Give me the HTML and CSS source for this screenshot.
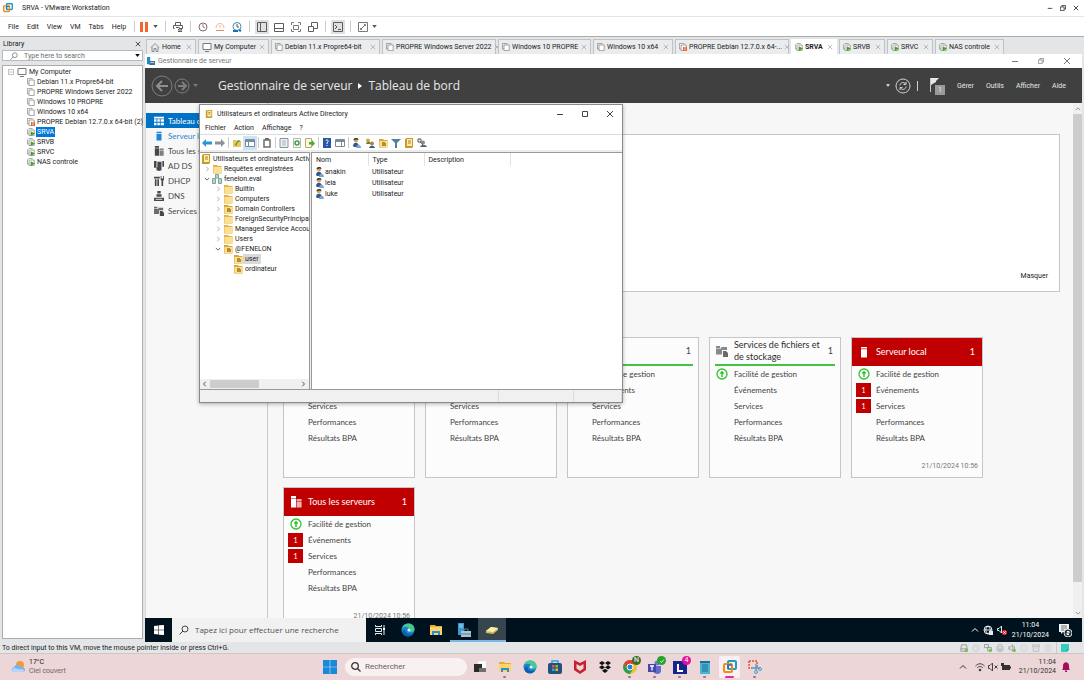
FILE: index.html
```html
<!DOCTYPE html>
<html lang="fr">
<head>
    <meta charset="UTF-8">
    <meta name="viewport" content="width=device-width, initial-scale=1.0">
    <title>SRVA - VMware Workstation</title>
    <link rel="stylesheet" href="styles.css">
</head>
<body>
    <svg class="d-none" aria-hidden="true">
        <symbol id="i-vm" viewBox="0 0 10 10">
            <path d="M2.5 7.5h-2v-7h6v1" fill="none" stroke="#8a8d90"/>
            <path d="M2.5 2.5h6.500v7h-6.500z" fill="#fff" stroke="#8a8d90"/>
        </symbol>
        <symbol id="i-vm-run" viewBox="0 0 10 10">
            <path d="M2.500 7.500h-2v-5l2-2h4v1M2.500 9.500v-6l1-1h5.500v7z" fill="#fff" stroke="#8a8d90"/>
            <path d="M4.500 4l5.500 3-5.500 3z" fill="#3fa21c"/>
        </symbol>
        <symbol id="i-vm-pause" viewBox="0 0 10 10">
            <path d="M2.500 7.500h-2v-7h6v1M2.500 9.500v-7h6.500v7z" fill="#fff" stroke="#8a8d90"/>
            <path d="M5 5h2v5h-2zM8 5h2v5h-2z" fill="#f0622d"/>
        </symbol>
        <symbol id="i-pc" viewBox="0 0 10 10">
            <path d="M1 1.500h8v6h-8zM3 9.500h4" fill="#fff" stroke="#77797c"/>
        </symbol>
        <symbol id="i-home" viewBox="0 0 10 10">
            <path d="M1 5.500l4-4 4 4M2 5v4.500h2v-3h2v3h2v-4.500" fill="none" stroke="#8a8d90"/>
        </symbol>
        <symbol id="i-search" viewBox="0 0 10 10">
            <circle cx="6" cy="4" r="3" fill="none" stroke="currentColor"/>
            <path d="M4 6l-3.500 3.500" stroke="currentColor"/>
        </symbol>
        <symbol id="i-caret" viewBox="0 0 6 4"><path d="M0 0h6l-3 4z" fill="currentColor"/></symbol>
        <symbol id="i-min" viewBox="0 0 8 8"><path d="M1 4.500h6" stroke="currentColor"/></symbol>
        <symbol id="i-max" viewBox="0 0 8 8"><path d="M1.500 1.500h5v5h-5z" fill="none" stroke="currentColor"/></symbol>
        <symbol id="i-restore" viewBox="0 0 8 8"><path d="M.5 2.500h5v5h-5zM2.500 2v-1.500h5v5h-1.500" fill="none" stroke="currentColor"/></symbol>
        <symbol id="i-close" viewBox="0 0 8 8"><path d="M1 1l6 6M7 1l-6 6" stroke="currentColor"/></symbol>
        <symbol id="i-right" viewBox="0 0 8 8"><path d="M3 1l3 3-3 3" fill="none" stroke="currentColor"/></symbol>
        <symbol id="i-down" viewBox="0 0 8 8"><path d="M1 2.500l3 3 3-3" fill="none" stroke="currentColor"/></symbol>
        <symbol id="i-up" viewBox="0 0 8 8"><path d="M1 5.500l3-3 3 3" fill="none" stroke="currentColor"/></symbol>
        <symbol id="i-left" viewBox="0 0 8 8"><path d="M5 1l-3 3 3 3" fill="none" stroke="currentColor"/></symbol>
        <symbol id="i-vmware" viewBox="0 0 14 14">
            <rect x="5" y="1" width="8" height="8" rx="1" fill="none" stroke="#1c9bc9" stroke-width="2"/>
            <rect x="1" y="4" width="8" height="8" rx="1" fill="none" stroke="#f08c1e" stroke-width="2"/>
            <path d="M5 9V5h4" fill="none" stroke="#1b75ac" stroke-width="1.500"/>
        </symbol>
        <symbol id="i-folder" viewBox="0 0 10 10">
            <path d="M1 1h4l1 1h3.500v7.500h-8.500z" fill="#e3b34c"/>
            <path d="M1.500 3h8v6h-8z" fill="#fbe094"/>
        </symbol>
        <symbol id="i-ou" viewBox="0 0 10 10">
            <path d="M1 1h4l1 1h3.500v7.500h-8.500z" fill="#d9a63a"/>
            <path d="M1.500 3h8v6h-8z" fill="#fbe094"/>
            <path d="M4 4h3v1h1v3h-4z" fill="#b98d2e"/>
        </symbol>
        <symbol id="i-book" viewBox="0 0 10 10">
            <path d="M1 1l2-1h6v9l-1 1h-7z" fill="#c79a28"/>
            <path d="M3 1h5v7h-5z" fill="#ffeeb0"/>
            <path d="M4 3h3M4 5h3" stroke="#a78228"/>
        </symbol>
        <symbol id="i-domain" viewBox="0 0 10 10">
            <path d="M3.500 .5h3v3.500h-3zM.5 4.500h3v5h-3zM6.500 4.500h3v5h-3z" fill="#b5d6c8" stroke="#7fa69a"/>
        </symbol>
        <symbol id="i-user" viewBox="0 0 8 10">
            <circle cx="3" cy="2.500" r="2" fill="#d0a268"/>
            <path d="M.5 2.500c0-3.500 5-3.500 5-.5l-2-.5z" fill="#4c3a22"/>
            <path d="M0 8c0-4.500 5.500-4.500 6 0l-1 1h-4z" fill="#31598c"/>
            <path d="M3 10c0-4.500 5-4.500 5 0z" fill="#7ba5d3"/>
        </symbol>
        <symbol id="i-manage" viewBox="0 0 12 12">
            <circle cx="6" cy="6" r="5" fill="#fff" stroke="#2fc42f" stroke-width="1.300"/>
            <path d="M6 9v-5M4.300 5.500l1.700-1.700 1.700 1.700" fill="none" stroke="#2fc42f" stroke-width="1.500"/>
        </symbol>
        <symbol id="i-server" viewBox="0 0 12 12"><path d="M3 1h6v1.500h-6zM3 3.200h6v8.300h-6z" fill="currentColor"/></symbol>
        <symbol id="i-servers" viewBox="0 0 12 12">
            <path d="M1 0h5v2h-5zM1 2.600h5v9h-5z" fill="currentColor"/>
            <path d="M6.600 3h5v2h-5zM6.600 5.600h5v6h-5z" fill="currentColor" opacity="0.700"/>
        </symbol>
        <symbol id="i-files" viewBox="0 0 12 12">
            <path d="M0 1h4v2h-4zM0 3.500h6v6h-6zM5 2h6v3h-5z" fill="currentColor" opacity="0.800"/>
            <path d="M7 6h3l2 2v4h-5z" fill="currentColor"/>
        </symbol>
        <symbol id="i-edge" viewBox="0 0 14 14">
            <circle cx="7" cy="7" r="6.500" fill="#1687cf"/>
            <path d="M1 5c2-6 12-6 12.500 1 0 3-4 4-5.500 2 2-3-3-6-7-3z" fill="#48c991"/>
            <path d="M4.500 6c-1 4 3 6 7.500 4.500-3 5-11 3-10.500-2.500z" fill="#0d5eae"/>
            <circle cx="8" cy="7" r="1.500" fill="#e9f3f6"/>
        </symbol>
        <symbol id="i-explorer" viewBox="0 0 14 14">
            <path d="M1 2h5l1 1h6v9h-12z" fill="#e9ab28"/>
            <path d="M1 4h12v8h-12z" fill="#fbd667"/>
            <path d="M3 8h8v4h-2v-2h-4v2h-2z" fill="#2e8bd5"/>
        </symbol>
    </svg>

    <div class="desktop">
        <header class="host-title">
            <svg class="icon-10"><use href="#i-vmware"/></svg>
            <h1 class="host-title-text">SRVA - VMware Workstation</h1>
            <div class="window-buttons host-buttons">
                <button type="button" aria-label="Minimize"><svg class="icon-6"><use href="#i-min"/></svg></button>
                <button type="button" aria-label="Restore"><svg class="icon-6"><use href="#i-restore"/></svg></button>
                <button type="button" aria-label="Close"><svg class="icon-6"><use href="#i-close"/></svg></button>
            </div>
        </header>

        <nav class="host-menu">
            <button type="button" class="menu-item">File</button>
            <button type="button" class="menu-item">Edit</button>
            <button type="button" class="menu-item">View</button>
            <button type="button" class="menu-item">VM</button>
            <button type="button" class="menu-item">Tabs</button>
            <button type="button" class="menu-item">Help</button>
            <span class="separator"></span>
            <button type="button" class="tool tool-pause" aria-label="Suspend">
                <svg class="icon-10" viewBox="0 0 10 10"><path d="M1 0h3v10h-3zM6 0h3v10h-3z" fill="#f2662b"/></svg>
            </button>
            <button type="button" class="tool-caret" aria-label="Power options"><svg class="caret"><use href="#i-caret"/></svg></button>
            <span class="separator"></span>
            <button type="button" class="tool" aria-label="Send Ctrl+Alt+Del">
                <svg class="icon-10" viewBox="0 0 10 10"><path d="M2.500 3v-2.500h5v2.500M1.500 6.500h-1v-3h9v3h-2M3 5.500h3.500M7 6l-2 2h4zM5 9.500h4" fill="none" stroke="#5b5e61"/></svg>
            </button>
            <span class="separator"></span>
            <button type="button" class="tool" aria-label="Take snapshot">
                <svg class="icon-10" viewBox="0 0 10 10"><circle cx="5" cy="5" r="4" fill="none" stroke="#6f7376"/><path d="M5 2v3l2 1" fill="none" stroke="#e06037"/></svg>
            </button>
            <button type="button" class="tool" aria-label="Revert snapshot">
                <svg class="icon-10" viewBox="0 0 10 10"><path d="M1 6c0-6 8-6 8 0M5 3v3" fill="none" stroke="#e9b9a4"/><path d="M1 8.500h8" stroke="#f08a60"/></svg>
            </button>
            <button type="button" class="tool" aria-label="Manage snapshots">
                <svg class="icon-10" viewBox="0 0 10 10"><circle cx="5" cy="4.500" r="4" fill="none" stroke="#3989bd"/><path d="M5 2v3h2" fill="none" stroke="#555"/><path d="M1 9h5M7 8l2 1" stroke="#1672ad" stroke-width="2"/></svg>
            </button>
            <span class="separator"></span>
            <button type="button" class="tool tool-on" aria-label="Library">
                <svg class="icon-10" viewBox="0 0 10 10"><path d="M.5 .5h9v9h-9zM3.500 .5v9" fill="none" stroke="#5b5e61"/></svg>
            </button>
            <button type="button" class="tool" aria-label="Thumbnail bar">
                <svg class="icon-10" viewBox="0 0 10 10"><path d="M.5 1.500h9v8h-9zM.5 6.500h9" fill="none" stroke="#5b5e61"/></svg>
            </button>
            <button type="button" class="tool" aria-label="Full screen">
                <svg class="icon-10" viewBox="0 0 10 10"><path d="M.5 3v-2.500h2.500M7 .5h2.500v2.500M9.500 7v2.500h-2.500M3 9.500h-2.500v-2.500M2.500 3.500h5v4h-5z" fill="none" stroke="#77797c"/></svg>
            </button>
            <button type="button" class="tool" aria-label="Unity">
                <svg class="icon-10" viewBox="0 0 10 10"><path d="M.5 4.500h5v5h-5zM3.500 4v-3.500h6v6h-3.500" fill="none" stroke="#5b5e61"/></svg>
            </button>
            <span class="separator"></span>
            <button type="button" class="tool tool-on" aria-label="Console">
                <svg class="icon-10" viewBox="0 0 10 10"><path d="M.5 .5h9v9h-9zM2 3l2 2-2 2M5 7.500h3" fill="none" stroke="#5b5e61"/></svg>
            </button>
            <span class="separator"></span>
            <button type="button" class="tool" aria-label="Stretch">
                <svg class="icon-10" viewBox="0 0 10 10"><path d="M.5 .5h9v9h-9zM6 2.500h1.500v1.500M2.500 6v1.500h1.500M7 3l-4 4" fill="none" stroke="#77797c"/></svg>
            </button>
            <button type="button" class="tool-caret" aria-label="Stretch options"><svg class="caret"><use href="#i-caret"/></svg></button>
        </nav>

        <div class="workspace">
            <aside class="library">
                <div class="library-head">
                    <h2>Library</h2>
                    <button type="button" aria-label="Close library"><svg class="icon-6"><use href="#i-close"/></svg></button>
                </div>
                <div class="library-search">
                    <svg class="icon-8"><use href="#i-search"/></svg>
                    <input type="text" placeholder="Type here to search" aria-label="Search library">
                    <button type="button" aria-label="Search options"><svg class="caret"><use href="#i-caret"/></svg></button>
                </div>
                <ul class="library-tree">
                    <li class="library-root">
                        <svg class="icon-6" viewBox="0 0 8 8"><path d="M.5 .5h7v7h-7zM2 4h4" fill="none" stroke="#a0a3a6"/></svg>
                        <button type="button"><svg class="icon-10"><use href="#i-pc"/></svg><span>My Computer</span></button>
                    </li>
                    <li><button type="button"><svg class="icon-8"><use href="#i-vm"/></svg><span>Debian 11.x Propre64-bit</span></button></li>
                    <li><button type="button"><svg class="icon-8"><use href="#i-vm"/></svg><span>PROPRE Windows Server 2022</span></button></li>
                    <li><button type="button"><svg class="icon-8"><use href="#i-vm"/></svg><span>Windows 10 PROPRE</span></button></li>
                    <li><button type="button"><svg class="icon-8"><use href="#i-vm"/></svg><span>Windows 10 x64</span></button></li>
                    <li><button type="button"><svg class="icon-8"><use href="#i-vm-pause"/></svg><span>PROPRE Debian 12.7.0.x 64-bit (2)</span></button></li>
                    <li><button type="button" class="selected"><svg class="icon-8"><use href="#i-vm-run"/></svg><span>SRVA</span></button></li>
                    <li><button type="button"><svg class="icon-8"><use href="#i-vm-run"/></svg><span>SRVB</span></button></li>
                    <li><button type="button"><svg class="icon-8"><use href="#i-vm-run"/></svg><span>SRVC</span></button></li>
                    <li><button type="button"><svg class="icon-8"><use href="#i-vm-run"/></svg><span>NAS controle</span></button></li>
                </ul>
            </aside>

            <section class="console">
                <nav class="tabs">
                    <button type="button" class="tab tab-home"><svg class="icon-10"><use href="#i-home"/></svg><span>Home</span><svg class="icon-6 tab-x"><use href="#i-close"/></svg></button>
                    <button type="button" class="tab tab-computer"><svg class="icon-10"><use href="#i-pc"/></svg><span>My Computer</span><svg class="icon-6 tab-x"><use href="#i-close"/></svg></button>
                    <button type="button" class="tab tab-debian"><svg class="icon-8"><use href="#i-vm"/></svg><span>Debian 11.x Propre64-bit</span><svg class="icon-6 tab-x"><use href="#i-close"/></svg></button>
                    <button type="button" class="tab tab-long"><svg class="icon-8"><use href="#i-vm"/></svg><span>PROPRE Windows Server 2022</span><svg class="icon-6 tab-x"><use href="#i-close"/></svg></button>
                    <button type="button" class="tab tab-win"><svg class="icon-8"><use href="#i-vm"/></svg><span>Windows 10 PROPRE</span><svg class="icon-6 tab-x"><use href="#i-close"/></svg></button>
                    <button type="button" class="tab tab-x64"><svg class="icon-8"><use href="#i-vm"/></svg><span>Windows 10 x64</span><svg class="icon-6 tab-x"><use href="#i-close"/></svg></button>
                    <button type="button" class="tab tab-long"><svg class="icon-8"><use href="#i-vm-pause"/></svg><span>PROPRE Debian 12.7.0.x 64-...</span><svg class="icon-6 tab-x"><use href="#i-close"/></svg></button>
                    <button type="button" class="tab tab-srv tab-active"><svg class="icon-8"><use href="#i-vm-run"/></svg><span>SRVA</span><svg class="icon-6 tab-x"><use href="#i-close"/></svg></button>
                    <button type="button" class="tab tab-srv"><svg class="icon-8"><use href="#i-vm-run"/></svg><span>SRVB</span><svg class="icon-6 tab-x"><use href="#i-close"/></svg></button>
                    <button type="button" class="tab tab-srv"><svg class="icon-8"><use href="#i-vm-run"/></svg><span>SRVC</span><svg class="icon-6 tab-x"><use href="#i-close"/></svg></button>
                    <button type="button" class="tab tab-nas"><svg class="icon-8"><use href="#i-vm-run"/></svg><span>NAS controle</span><svg class="icon-6 tab-x"><use href="#i-close"/></svg></button>
                </nav>

                <div class="guest">
                    <div class="manager-title">
                        <svg class="icon-8" viewBox="0 0 10 10"><path d="M0 0h4v9h-4z" fill="#1f8ad0"/><path d="M3 5h7v5h-7z" fill="#3c6f96"/><path d="M4 7h5" stroke="#dbe9f3"/></svg>
                        <h2>Gestionnaire de serveur</h2>
                        <div class="window-buttons manager-buttons">
                            <button type="button" aria-label="Réduire"><svg class="icon-8"><use href="#i-min"/></svg></button>
                            <button type="button" aria-label="Restaurer"><svg class="icon-6"><use href="#i-restore"/></svg></button>
                            <button type="button" aria-label="Fermer"><svg class="icon-8"><use href="#i-close"/></svg></button>
                        </div>
                    </div>

                    <div class="manager-bar">
                        <button type="button" aria-label="Précédent">
                            <svg class="icon-22" viewBox="0 0 22 22"><circle cx="11" cy="11" r="10" fill="none" stroke="#7e7e7e"/><path d="M17 11h-11M11 6l-5 5 5 5" fill="none" stroke="#8f8f8f" stroke-width="2"/></svg>
                        </button>
                        <button type="button" aria-label="Suivant">
                            <svg class="icon-16" viewBox="0 0 16 16"><circle cx="8" cy="8" r="7" fill="none" stroke="#7e7e7e"/><path d="M4 8h8M8 4l4 4-4 4" fill="none" stroke="#7e7e7e" stroke-width="2"/></svg>
                        </button>
                        <button type="button" class="bar-history" aria-label="Historique"><svg class="caret"><use href="#i-caret"/></svg></button>
                        <p class="bar-path"><span>Gestionnaire de serveur</span><svg class="path-arrow" viewBox="0 0 4 6"><path d="M0 0l4 3-4 3z" fill="#fff"/></svg><span>Tableau de bord</span></p>
                        <div class="bar-tools">
                            <button type="button" aria-label="Options"><svg class="bar-caret"><use href="#i-caret"/></svg></button>
                            <button type="button" aria-label="Actualiser">
                                <svg class="icon-16" viewBox="0 0 16 16"><circle cx="8" cy="8" r="7" fill="none" stroke="#d0d0d0"/><path d="M5 7.500c0-3 4-4 5.500-1.500M11 4v2.500h-2.500M11 8.500c0 3-4 4-5.500 1.500M5 12v-2.500h2.500" fill="none" stroke="#d0d0d0"/></svg>
                            </button>
                            <span class="bar-rule"></span>
                            <button type="button" class="flag" aria-label="Notifications">
                                <svg viewBox="0 0 10 16"><path d="M1 0h1v14h-1z" fill="#c8c8c8"/><path d="M2 0h8l-3 3v1l-5 3z" fill="#e6e6e6"/></svg>
                                <span class="flag-count">1</span>
                            </button>
                            <button type="button" class="bar-menu">Gérer</button>
                            <button type="button" class="bar-menu">Outils</button>
                            <button type="button" class="bar-menu">Afficher</button>
                            <button type="button" class="bar-menu">Aide</button>
                        </div>
                    </div>

                    <div class="manager-body">
                        <nav class="roles">
                            <a href="#" class="role role-active"><svg class="icon-10" viewBox="0 0 12 12"><path d="M0 1h12v2h-12zM0 4h3v3h-3zM4 4h3v3h-3zM8 4h4v3h-4zM0 8h3v3h-3zM4 8h3v3h-3zM8 8h4v3h-4z" fill="#fff"/></svg>Tableau de bord</a>
                            <a href="#" class="role role-local"><svg class="icon-10"><use href="#i-server"/></svg>Serveur local</a>
                            <a href="#" class="role"><svg class="icon-10"><use href="#i-servers"/></svg>Tous les serveurs</a>
                            <a href="#" class="role"><svg class="icon-10" viewBox="0 0 12 12"><path d="M0 0h3v8h-3zM4 1h5v7h-5zM10 0h2v7h-2zM3 8l3-2 3 2v3l-3 1-3-1z" fill="currentColor"/></svg>AD DS</a>
                            <a href="#" class="role"><svg class="icon-10" viewBox="0 0 12 12"><path d="M0 1h7v2h-7zM1 4h2v8h-2zM4 4h2v8h-2zM8 0h1v3h2v-3h1v5h-1v7h-2v-7h-1z" fill="currentColor"/></svg>DHCP</a>
                            <a href="#" class="role"><svg class="icon-10" viewBox="0 0 12 12"><path d="M4 0h4v3h-4zM3 4h6v3h-6zM0 8h12v4h-12z" fill="currentColor"/><path d="M2 10h8" stroke="#f7f7f7"/></svg>DNS</a>
                            <a href="#" class="role"><svg class="icon-10"><use href="#i-files"/></svg>Services de fichiers et de stockage</a>
                        </nav>

                        <main class="dashboard">
                            <section class="welcome"><a href="#">Masquer</a></section>
                            <div class="tiles">
                                <article class="tile">
                                    <div class="tile-head"><svg class="icon-12"><use href="#i-servers"/></svg><h3>AD DS</h3><span>1</span></div>
                                    <ul class="tile-rows">
                                        <li><svg class="icon-12"><use href="#i-manage"/></svg><a href="#">Facilité de gestion</a></li>
                                        <li><a href="#">Événements</a></li>
                                        <li><a href="#">Services</a></li>
                                        <li><a href="#">Performances</a></li>
                                        <li><a href="#">Résultats BPA</a></li>
                                    </ul>
                                </article>
                                <article class="tile">
                                    <div class="tile-head"><svg class="icon-12"><use href="#i-servers"/></svg><h3>DHCP</h3><span>1</span></div>
                                    <ul class="tile-rows">
                                        <li><svg class="icon-12"><use href="#i-manage"/></svg><a href="#">Facilité de gestion</a></li>
                                        <li><a href="#">Événements</a></li>
                                        <li><a href="#">Services</a></li>
                                        <li><a href="#">Performances</a></li>
                                        <li><a href="#">Résultats BPA</a></li>
                                    </ul>
                                </article>
                                <article class="tile">
                                    <div class="tile-head"><svg class="icon-12"><use href="#i-servers"/></svg><h3>DNS</h3><span>1</span></div>
                                    <ul class="tile-rows">
                                        <li><svg class="icon-12"><use href="#i-manage"/></svg><a href="#">Facilité de gestion</a></li>
                                        <li><a href="#">Événements</a></li>
                                        <li><a href="#">Services</a></li>
                                        <li><a href="#">Performances</a></li>
                                        <li><a href="#">Résultats BPA</a></li>
                                    </ul>
                                </article>
                                <article class="tile">
                                    <div class="tile-head"><svg class="icon-12"><use href="#i-files"/></svg><h3>Services de fichiers et de stockage</h3><span>1</span></div>
                                    <ul class="tile-rows">
                                        <li><svg class="icon-12"><use href="#i-manage"/></svg><a href="#">Facilité de gestion</a></li>
                                        <li><a href="#">Événements</a></li>
                                        <li><a href="#">Services</a></li>
                                        <li><a href="#">Performances</a></li>
                                        <li><a href="#">Résultats BPA</a></li>
                                    </ul>
                                </article>
                                <article class="tile tile-alert">
                                    <div class="tile-head"><svg class="icon-12"><use href="#i-server"/></svg><h3>Serveur local</h3><span>1</span></div>
                                    <ul class="tile-rows">
                                        <li><svg class="icon-12"><use href="#i-manage"/></svg><a href="#">Facilité de gestion</a></li>
                                        <li><span class="alert-count">1</span><a href="#">Événements</a></li>
                                        <li><span class="alert-count">1</span><a href="#">Services</a></li>
                                        <li><a href="#">Performances</a></li>
                                        <li><a href="#">Résultats BPA</a></li>
                                    </ul>
                                    <p class="tile-date">21/10/2024 10:56</p>
                                </article>
                                <article class="tile tile-alert">
                                    <div class="tile-head"><svg class="icon-12"><use href="#i-servers"/></svg><h3>Tous les serveurs</h3><span>1</span></div>
                                    <ul class="tile-rows">
                                        <li><svg class="icon-12"><use href="#i-manage"/></svg><a href="#">Facilité de gestion</a></li>
                                        <li><span class="alert-count">1</span><a href="#">Événements</a></li>
                                        <li><span class="alert-count">1</span><a href="#">Services</a></li>
                                        <li><a href="#">Performances</a></li>
                                        <li><a href="#">Résultats BPA</a></li>
                                    </ul>
                                    <p class="tile-date">21/10/2024 10:56</p>
                                </article>
                            </div>
                        </main>

                        <div class="scroll-v">
                            <svg class="icon-6"><use href="#i-up"/></svg>
                            <span class="scroll-v-thumb"></span>
                            <svg class="icon-6"><use href="#i-down"/></svg>
                        </div>
                    </div>

                    <!-- Active Directory -->
                    <section class="ad-window">
                        <div class="ad-title">
                            <svg class="icon-8"><use href="#i-book"/></svg>
                            <h2>Utilisateurs et ordinateurs Active Directory</h2>
                            <div class="window-buttons ad-buttons">
                                <button type="button" aria-label="Réduire"><svg class="icon-8"><use href="#i-min"/></svg></button>
                                <button type="button" aria-label="Agrandir"><svg class="icon-8"><use href="#i-max"/></svg></button>
                                <button type="button" aria-label="Fermer"><svg class="icon-8"><use href="#i-close"/></svg></button>
                            </div>
                        </div>
                        <div class="ad-menu">
                            <button type="button">Fichier</button>
                            <button type="button">Action</button>
                            <button type="button">Affichage</button>
                            <button type="button">?</button>
                        </div>
                        <div class="ad-toolbar">
                            <button type="button" aria-label="Précédent"><svg class="icon-10" viewBox="0 0 10 10"><path d="M0 5l4-4v2.500h6v3h-6v2.500z" fill="#2b93d6"/></svg></button>
                            <button type="button" aria-label="Suivant"><svg class="icon-10" viewBox="0 0 10 10"><path d="M10 5l-4-4v2.500h-6v3h6v2.500z" fill="#8b9196"/></svg></button>
                            <span class="separator"></span>
                            <button type="button" aria-label="Dossier parent"><svg class="icon-10" viewBox="0 0 10 10"><path d="M1 2h3l1 1h4v6h-8z" fill="#f0c35c"/><path d="M3 7l3-5 3 1-3 1-2 4z" fill="#3d9b38"/></svg></button>
                            <button type="button" class="ad-tool-on" aria-label="Arborescence"><svg class="icon-10" viewBox="0 0 10 10"><path d="M.5 1.500h9v7h-9zM3.500 4v5" fill="#fff" stroke="#7a8b98"/><path d="M1 3h8" stroke="#7a8b98" stroke-width="2"/></svg></button>
                            <span class="separator"></span>
                            <button type="button" aria-label="Coller"><svg class="icon-10" viewBox="0 0 10 10"><path d="M2 2h6v7h-6z" fill="#fff" stroke="#6d6d6d" stroke-width="1.500"/><path d="M3 0h4v2h-4z" fill="#6d6d6d"/></svg></button>
                            <span class="separator"></span>
                            <button type="button" aria-label="Propriétés"><svg class="icon-10" viewBox="0 0 10 10"><path d="M1 .5h8v9h-8z" fill="#f0f3f5" stroke="#87939b"/><path d="M3 3h4M3 5h4M3 7h4" stroke="#a5b1b8"/></svg></button>
                            <button type="button" aria-label="Actualiser"><svg class="icon-10" viewBox="0 0 10 10"><path d="M1.500 .5h7v9h-7z" fill="#fafafa" stroke="#b5b5b5"/><circle cx="5" cy="5" r="2" fill="none" stroke="#38a838" stroke-width="1.500"/></svg></button>
                            <button type="button" aria-label="Exporter"><svg class="icon-10" viewBox="0 0 10 10"><path d="M.5 .5h6v9h-6z" fill="#fdf7d8" stroke="#b9a976"/><path d="M4 4h3v-2l3 3.500-3 3v-2h-3z" fill="#44ad3c"/></svg></button>
                            <span class="separator"></span>
                            <button type="button" aria-label="Aide"><svg class="icon-10" viewBox="0 0 10 10"><path d="M1 0h8v10h-8z" fill="#2857a8"/><path d="M4 3c0-2 3-1 2 .5l-1 1.500v1M5 7v1" fill="none" stroke="#fff"/></svg></button>
                            <button type="button" aria-label="Volet Actions"><svg class="icon-10" viewBox="0 0 10 10"><path d="M.5 1.500h9v7h-9zM6.500 4v5" fill="#fff" stroke="#7a8b98"/><path d="M1 3h8" stroke="#7a8b98" stroke-width="2"/></svg></button>
                            <span class="separator"></span>
                            <button type="button" aria-label="Nouvel utilisateur"><svg class="icon-10"><use href="#i-user"/></svg></button>
                            <button type="button" aria-label="Nouveau groupe"><svg class="icon-10" viewBox="0 0 10 10"><circle cx="3" cy="2.500" r="2" fill="#d8a43b"/><path d="M1 6c1-3 4-3 5 0z" fill="#56823c"/><circle cx="7" cy="5.500" r="2" fill="#b97e39"/><path d="M4 10c1-3 5-3 6 0z" fill="#31598c"/></svg></button>
                            <button type="button" aria-label="Nouvelle unité d'organisation"><svg class="icon-10"><use href="#i-ou"/></svg></button>
                            <button type="button" aria-label="Filtre"><svg class="icon-10" viewBox="0 0 10 10"><path d="M0 1h10l-4 4v5h-2v-5z" fill="#54809b"/></svg></button>
                            <button type="button" aria-label="Rechercher"><svg class="icon-10"><use href="#i-book"/></svg></button>
                            <button type="button" aria-label="Ajouter au groupe"><svg class="icon-10" viewBox="0 0 10 10"><path d="M1 1h3v3h-3zM3 4l5 5" fill="none" stroke="#555"/><circle cx="6" cy="4.500" r="2" fill="#8b8b8b"/><path d="M3 9c1-3 6-3 7 0z" fill="#5d6770"/></svg></button>
                        </div>

                        <div class="ad-panes">
                            <div class="ad-left">
                                <ul class="ad-tree">
                                    <li><button type="button"><svg class="icon-10"><use href="#i-book"/></svg><span>Utilisateurs et ordinateurs Active</span></button></li>
                                    <li class="depth-1"><svg class="icon-6 twisty"><use href="#i-right"/></svg><button type="button"><svg class="icon-10"><use href="#i-folder"/></svg><span>Requêtes enregistrées</span></button></li>
                                    <li class="depth-1"><svg class="icon-6 twisty-open"><use href="#i-down"/></svg><button type="button"><svg class="icon-10"><use href="#i-domain"/></svg><span>fenelon.eval</span></button></li>
                                    <li class="depth-2"><svg class="icon-6 twisty"><use href="#i-right"/></svg><button type="button"><svg class="icon-10"><use href="#i-folder"/></svg><span>Builtin</span></button></li>
                                    <li class="depth-2"><svg class="icon-6 twisty"><use href="#i-right"/></svg><button type="button"><svg class="icon-10"><use href="#i-folder"/></svg><span>Computers</span></button></li>
                                    <li class="depth-2"><svg class="icon-6 twisty"><use href="#i-right"/></svg><button type="button"><svg class="icon-10"><use href="#i-ou"/></svg><span>Domain Controllers</span></button></li>
                                    <li class="depth-2"><svg class="icon-6 twisty"><use href="#i-right"/></svg><button type="button"><svg class="icon-10"><use href="#i-folder"/></svg><span>ForeignSecurityPrincipals</span></button></li>
                                    <li class="depth-2"><svg class="icon-6 twisty"><use href="#i-right"/></svg><button type="button"><svg class="icon-10"><use href="#i-folder"/></svg><span>Managed Service Accounts</span></button></li>
                                    <li class="depth-2"><svg class="icon-6 twisty"><use href="#i-right"/></svg><button type="button"><svg class="icon-10"><use href="#i-folder"/></svg><span>Users</span></button></li>
                                    <li class="depth-2"><svg class="icon-6 twisty-open"><use href="#i-down"/></svg><button type="button"><svg class="icon-10"><use href="#i-ou"/></svg><span>@FENELON</span></button></li>
                                    <li class="depth-3"><button type="button" class="selected"><svg class="icon-10"><use href="#i-ou"/></svg><span>user</span></button></li>
                                    <li class="depth-3"><button type="button"><svg class="icon-10"><use href="#i-ou"/></svg><span>ordinateur</span></button></li>
                                </ul>
                                <div class="scroll-h">
                                    <svg class="icon-6"><use href="#i-left"/></svg>
                                    <span class="scroll-h-thumb"></span>
                                    <svg class="icon-6"><use href="#i-right"/></svg>
                                </div>
                            </div>
                            <div class="ad-list">
                                <table>
                                    <thead>
                                        <tr><th class="col-name">Nom</th><th class="col-type">Type</th><th class="col-desc">Description</th><th></th></tr>
                                    </thead>
                                    <tbody>
                                        <tr><td><svg class="icon-user"><use href="#i-user"/></svg>anakin</td><td>Utilisateur</td><td></td><td></td></tr>
                                        <tr><td><svg class="icon-user"><use href="#i-user"/></svg>leia</td><td>Utilisateur</td><td></td><td></td></tr>
                                        <tr><td><svg class="icon-user"><use href="#i-user"/></svg>luke</td><td>Utilisateur</td><td></td><td></td></tr>
                                    </tbody>
                                </table>
                            </div>
                        </div>
                        <div class="ad-status"><span></span><span></span><span></span></div>
                    </section>

                    <footer class="guest-taskbar">
                        <button type="button" class="guest-start" aria-label="Démarrer">
                            <svg class="icon-10" viewBox="0 0 10 10"><path d="M0 1l4.500-.6v4.300h-4.500zM5 .3l5-.3v4.700h-5zM0 5.300h4.500v4.300l-4.500-.6zM5 5.300h5v4.700l-5-.3z" fill="#fff"/></svg>
                        </button>
                        <div class="guest-search">
                            <svg class="icon-10"><use href="#i-search"/></svg>
                            <input type="text" placeholder="Tapez ici pour effectuer une recherche" aria-label="Recherche Windows">
                        </div>
                        <button type="button" class="guest-app" aria-label="Vue des tâches">
                            <svg class="icon-10" viewBox="0 0 10 10"><path d="M.5 0v1.500h6v-1.500M.5 3.500h6v3h-6zM.5 10v-1.500h6v1.500M9 0v3M9 5v5" fill="none" stroke="#e6eaec"/><path d="M8 3h2v2h-2z" fill="#fff"/></svg>
                        </button>
                        <button type="button" class="guest-app" aria-label="Edge"><svg class="icon-14"><use href="#i-edge"/></svg></button>
                        <button type="button" class="guest-app" aria-label="Explorateur"><svg class="icon-14"><use href="#i-explorer"/></svg></button>
                        <button type="button" class="guest-app guest-app-open" aria-label="Gestionnaire de serveur">
                            <svg class="icon-14" viewBox="0 0 14 14"><path d="M1 0h6v12h-6z" fill="#3c97d3"/><path d="M2 2h4M2 4h4" stroke="#a8d5f0"/><path d="M4 8h10v6h-10z" fill="#a9c4d4"/><path d="M7 8v-2h4v2M4 11h10" fill="none" stroke="#5c7f95"/></svg>
                        </button>
                        <button type="button" class="guest-app guest-app-open guest-app-active" aria-label="Active Directory">
                            <svg class="icon-14" viewBox="0 0 14 14"><path d="M1 8l5-4 7 1v2l-5 4-7-1z" fill="#d2bb5c"/><path d="M1 8l5-4 7 1-5 4z" fill="#fff0ae"/></svg>
                        </button>
                        <div class="guest-tray">
                            <button type="button" aria-label="Icônes cachées"><svg class="icon-8"><use href="#i-up"/></svg></button>
                            <button type="button" aria-label="Réseau"><svg class="icon-10" viewBox="0 0 10 10"><circle cx="5" cy="5" r="4" fill="none" stroke="#e6eaec"/><path d="M1 5h8M5 1c-3 3-3 5 0 8M5 1c3 3 3 5 0 8" fill="none" stroke="#e6eaec"/><path d="M6 6h4v4h-4z" fill="#e6eaec"/></svg></button>
                            <button type="button" aria-label="Volume"><svg class="icon-10" viewBox="0 0 10 10"><path d="M.5 3.500h1.500l2.500-2.500v7l-2.500-2.500h-1.500z" fill="none" stroke="#e6eaec"/><circle cx="7.500" cy="7.500" r="2.500" fill="#e8323c"/><path d="M6.500 6.500l2 2M8.500 6.500l-2 2" stroke="#fff"/></svg></button>
                            <p class="guest-clock">11:04<br>21/10/2024</p>
                            <button type="button" aria-label="Notifications"><svg class="icon-14" viewBox="0 0 14 14"><path d="M1 1h10v8h-6l-2 2v-2h-2z" fill="#f2f4f5"/><path d="M3 3h6M3 5h6M3 7h3" stroke="#69747b"/><circle cx="10" cy="10" r="4" fill="#2d3940" stroke="#d5dadd"/><path d="M9 8.500h2v1.500h-2v1.500h2" fill="none" stroke="#fff"/></svg></button>
                        </div>
                    </footer>
                </div>
            </section>
        </div>

        <footer class="host-status">
            <p>To direct input to this VM, move the mouse pointer inside or press Ctrl+G.</p>
            <div class="device-icons">
                <svg class="icon-8" viewBox="0 0 10 10"><path d="M1 6l1-5h6l1 5v3h-8zM1 6h8" fill="none" stroke="#8c8f92"/><circle cx="8" cy="8" r="2" fill="#74c342"/></svg>
                <svg class="icon-8" viewBox="0 0 10 10"><circle cx="5" cy="5" r="4" fill="none" stroke="#c2c4c6"/><path d="M5 3v2h2" fill="none" stroke="#c2c4c6"/></svg>
                <svg class="icon-8" viewBox="0 0 10 10"><path d="M.5 .5h5v4h-5zM4.500 4.500h5v4h-5z" fill="none" stroke="#8c8f92"/><circle cx="8" cy="8" r="2" fill="#74c342"/></svg>
                <svg class="icon-8" viewBox="0 0 10 10"><path d="M3 3v-2.500h4v2.500M1 3.500h8v4h-8zM3 6h4v3.500h-4z" fill="none" stroke="#aeb1b3"/></svg>
                <svg class="icon-8" viewBox="0 0 10 10"><path d="M1 3.500h2l3-2.500v8l-3-2.500h-2zM8 3v4" fill="none" stroke="#8c8f92"/><circle cx="8" cy="8" r="2" fill="#74c342"/></svg>
                <svg class="icon-8" viewBox="0 0 10 10"><circle cx="5" cy="5" r="4" fill="none" stroke="#cbcdcf"/><path d="M3 5h4" stroke="#cbcdcf"/></svg>
                <svg class="icon-8" viewBox="0 0 10 10"><path d="M.5 1h9v2h-9zM1.500 3v6h7v-6M4 5h2" fill="none" stroke="#b6b8ba"/></svg>
                <svg class="icon-8" viewBox="0 0 10 10"><circle cx="5" cy="5" r="4" fill="none" stroke="#cbcdcf"/><path d="M5 3v4" stroke="#b6b8ba"/></svg>
                <span class="separator"></span>
                <svg class="icon-8" viewBox="0 0 10 10"><path d="M0 0h10v7l-3 3h-7z" fill="#35cdbd"/><path d="M7 10v-3h3" fill="#1f9c90"/></svg>
            </div>
        </footer>

        <footer class="host-taskbar">
            <button type="button" class="weather">
                <svg class="icon-14" viewBox="0 0 14 14"><circle cx="9" cy="5" r="4" fill="#f39a35"/><path d="M3 12c-4-1-2-5 0-4.500 1-4 7-4 7 0 5-.5 5 4 2 4.500z" fill="#7fb0ee"/><path d="M3 12c-2-.5-3-3 0-4 3-.5 3 2 7 1 2 0 3 1 3 2l-1 1z" fill="#b7d5fa"/></svg>
                <span>17°C<small>Ciel couvert</small></span>
            </button>
            <div class="host-apps">
                <button type="button" class="host-start" aria-label="Start">
                    <svg class="icon-14" viewBox="0 0 14 14"><path d="M0 0h6.700v6.700h-6.700zM7.300 0h6.700v6.700h-6.700zM0 7.300h6.700v6.700h-6.700zM7.300 7.300h6.700v6.700h-6.700z" fill="#168bdc"/></svg>
                </button>
                <div class="host-search">
                    <svg class="icon-10" viewBox="0 0 10 10"><circle cx="4" cy="4" r="3.300" fill="none" stroke="#333" stroke-width="1.300"/><path d="M6.500 6.500l3 3" stroke="#333" stroke-width="1.300"/></svg>
                    <input type="text" placeholder="Rechercher" aria-label="Rechercher">
                </div>
                <button type="button" class="host-app" aria-label="Vue des tâches"><svg class="icon-14" viewBox="0 0 14 14"><path d="M5 1h8v9h-8z" fill="#f8f8f8"/><path d="M1 4h8v8h-8z" fill="#2b2b2b"/><path d="M6 8h7v4h-7z" fill="#707070"/></svg></button>
                <button type="button" class="host-app app-open" aria-label="Explorateur"><svg class="icon-14"><use href="#i-explorer"/></svg></button>
                <button type="button" class="host-app" aria-label="Edge"><svg class="icon-14"><use href="#i-edge"/></svg></button>
                <button type="button" class="host-app" aria-label="Microsoft Store"><svg class="icon-14" viewBox="0 0 14 14"><path d="M4 3v-2h6v2" fill="none" stroke="#2f9fe0" stroke-width="1.500"/><rect y="3" width="14" height="11" rx="2" fill="#24507f"/><path d="M4 5h2.500v2.500h-2.500z" fill="#f0562d"/><path d="M7.500 5h2.500v2.500h-2.500z" fill="#84bf35"/><path d="M4 8.500h2.500v2.500h-2.500z" fill="#2ba6e5"/><path d="M7.500 8.500h2.500v2.500h-2.500z" fill="#f8ba2c"/></svg></button>
                <button type="button" class="host-app" aria-label="McAfee"><svg class="icon-14" viewBox="0 0 14 14"><path d="M1 0l6 3 6-3v10l-6 4-6-4zM3.500 4v4.500l3.500 2.500 3.500-2.500v-4.500l-3.500 2z" fill="#c8202f" fill-rule="evenodd"/></svg></button>
                <button type="button" class="host-app" aria-label="Dropbox"><svg class="icon-14" viewBox="0 0 14 14"><path d="M4 1l3 2-3 2.300-3-2.300zM10 1l3 2-3 2.300-3-2.300zM4 5.300l3 2-3 2.300-3-2.300zM10 5.300l3 2-3 2.300-3-2.300zM7 8.800l3 2-3 2.200-3-2.200z" fill="#111"/></svg></button>
                <button type="button" class="host-app app-open" aria-label="Chrome">
                    <svg class="icon-14" viewBox="0 0 14 14"><circle cx="7" cy="7" r="7" fill="#f6c22c"/><path d="M1 3.500a7 7 0 0 1 12 0l-6 .5-3 5z" fill="#df3e30"/><path d="M1 3.500a7 7 0 0 0 6 10.500l3-5-5-.5z" fill="#2d9e4f"/><circle cx="7" cy="7" r="3" fill="#2f7de1" stroke="#fff"/></svg>
                    <span class="badge badge-profile">N</span>
                </button>
                <button type="button" class="host-app app-open" aria-label="Teams">
                    <svg class="icon-14" viewBox="0 0 14 14"><circle cx="9" cy="3" r="2.500" fill="#7075dc"/><path d="M5 6h8v5c0 4-7 4-8 0z" fill="#6469ce"/><path d="M0 4h8v8h-8z" fill="#4348ad"/><path d="M2 6h4M4 6v4.500" stroke="#fff" stroke-width="1.300"/></svg>
                    <span class="badge badge-ok"><svg class="icon-6" viewBox="0 0 8 8"><path d="M1.500 4l2 2 3-4" fill="none" stroke="#fff"/></svg></span>
                </button>
                <button type="button" class="host-app app-open" aria-label="Lists">
                    <svg class="icon-14" viewBox="0 0 14 14"><path d="M0 1h14v13h-14z" fill="#17248f"/><path d="M5 4v7h5" fill="none" stroke="#fff" stroke-width="2"/></svg>
                    <span class="badge badge-count">4</span>
                </button>
                <button type="button" class="host-app app-open" aria-label="Notepad"><svg class="icon-14" viewBox="0 0 14 14"><path d="M2 1h10v13h-10z" fill="#48b5d6"/><path d="M2 1h10v2h-10z" fill="#236c8b"/><path d="M4 5h6M4 7h6M4 9h6M4 11h6" stroke="#216f96"/></svg></button>
                <button type="button" class="host-app app-open app-active" aria-label="VMware Workstation"><svg class="icon-14"><use href="#i-vmware"/></svg></button>
                <button type="button" class="host-app app-open" aria-label="Snipping Tool"><svg class="icon-14" viewBox="0 0 14 14"><path d="M1 1h8v6M1 1v7h3" fill="none" stroke="#e0563f" stroke-width="1.500" stroke-dasharray="2 1"/><path d="M4 8h8M8 4v7" stroke="#4c9dc9" stroke-width="1.300"/><circle cx="12" cy="9" r="1.500" fill="none" stroke="#4c9dc9"/><circle cx="8" cy="12" r="1.500" fill="none" stroke="#4c9dc9"/></svg></button>
            </div>
            <div class="host-tray">
                <button type="button" aria-label="Hidden icons"><svg class="icon-8"><use href="#i-up"/></svg></button>
                <span class="tray-status">
                    <svg class="icon-10" viewBox="0 0 10 10"><path d="M.5 4c3-3 6-3 9 0M2 6c2-2 4-2 6 0" fill="none" stroke="#444"/><circle cx="5" cy="8" r="1.300" fill="#444"/></svg>
                    <svg class="icon-10" viewBox="0 0 10 10"><path d="M.5 3.500h1.500l2.500-2.500v8l-2.500-2.500h-1.500zM6.500 3.500l3 3M9.500 3.500l-3 3" fill="none" stroke="#444"/></svg>
                    <svg class="icon-10" viewBox="0 0 10 10"><path d="M1 3h8v5h-8zM0 1h3v3h-3z" fill="#333"/><path d="M9 4.500h1v2h-1z" fill="#333"/></svg>
                </span>
                <p class="host-clock">11:04<br>21/10/2024</p>
                <button type="button" aria-label="Notifications"><svg class="icon-10" viewBox="0 0 10 10"><path d="M1 8c1-1 1-2 1-4 0-5 6-5 6 0 0 2 0 3 1 4zM4 8.500h2v1.500h-2z" fill="#a30d5a"/></svg></button>
            </div>
        </footer>
    </div>
</body>
</html>
```
FILE: styles.css
```css
* {
    padding: 0;
    margin: 0;
    box-sizing: border-box;
}
body {
    font-family: Roboto, "Noto Sans", sans-serif;
    font-size: 7px;
    line-height: 10px;
    color: #1b1b1b;
    background-color: #fff;
}
ul {
    list-style: none;
}
h1, h2, h3 {
    font-size: inherit;
    font-weight: normal;
}
a {
    color: inherit;
    text-decoration: none;
}
button, input {
    font: inherit;
    color: inherit;
    background: none;
    border: 0;
    outline: 0;
}
button {
    cursor: pointer;
    white-space: nowrap;
}
svg {
    display: block;
    flex: none;
}
.d-none {
    display: none;
}
.icon-6 {
    width: 6px;
    height: 6px;
}
.icon-8 {
    width: 8px;
    height: 8px;
}
.icon-10 {
    width: 10px;
    height: 10px;
}
.icon-12 {
    width: 12px;
    height: 12px;
}
.icon-14 {
    width: 14px;
    height: 14px;
}
.icon-16 {
    width: 16px;
    height: 16px;
}
.icon-22 {
    width: 22px;
    height: 22px;
}
.caret {
    width: 5px;
    height: 3px;
}
.separator {
    width: 1px;
    height: 11px;
    background-color: #c9cbcd;
}
.window-buttons {
    display: flex;
    align-items: center;
    margin-left: auto;
}
.window-buttons button {
    display: flex;
    justify-content: center;
}

/* host window */
.desktop {
    display: flex;
    flex-direction: column;
    height: 100vh;
    overflow: hidden;
}
.host-title {
    display: flex;
    align-items: center;
    height: 17px;
    padding: 0 2px 0 3px;
    border-bottom: 1px solid #e6e6e6;
}
.host-title-text {
    margin-left: 9px;
}
.host-buttons button {
    width: 13px;
}
.host-menu {
    display: flex;
    align-items: center;
    height: 19px;
    padding-left: 8px;
    gap: 7px;
}
.menu-item {
    margin-right: 1px;
}
.tool-pause {
    margin-left: -3px;
}
.tool-caret {
    margin-left: -3px;
    color: #555;
}
.host-menu .tool-on {
    padding: 2px;
    margin: 0 -2px;
    background-color: #e0e0e0;
}
.workspace {
    display: flex;
    flex: 1;
    min-height: 0;
    border-top: 1px solid #a9abad;
    background-color: #e3e5e7;
}

/* library */
.library {
    display: flex;
    flex-direction: column;
    flex: none;
    width: 145px;
    padding: 1px 2px 3px;
}
.library-head {
    display: flex;
    align-items: center;
    justify-content: space-between;
    height: 12px;
    padding: 0 2px 0 1px;
}
.library-search {
    display: flex;
    align-items: center;
    height: 11px;
    padding: 0 2px 0 7px;
    margin-bottom: 4px;
    border: 1px solid #b7babc;
    background-color: #fff;
    color: #77797c;
}
.library-search input {
    flex: 1;
    min-width: 0;
    height: 9px;
    padding-left: 6px;
}
.library-search button {
    color: #000;
}
.library-search input::placeholder {
    color: #6c6f72;
}
.library-tree {
    flex: 1;
    padding-top: 1px;
    border: 1px solid #a9abad;
    background-color: #fff;
}
.library-tree li {
    display: flex;
    padding-left: 24px;
}
.library-tree .library-root {
    align-items: center;
    padding-left: 5px;
    gap: 3px;
}
.library-tree button {
    display: flex;
    align-items: center;
    gap: 1px;
}
.library-tree span {
    padding: 0 1px;
}
.library-tree .selected span {
    color: #fff;
    background-color: #0078d7;
}

/* console tabs */
.console {
    display: flex;
    flex-direction: column;
    flex: 1;
    min-width: 0;
    padding-right: 2px;
}
.tabs {
    display: flex;
    align-items: flex-end;
    height: 17px;
    padding-left: 1px;
    gap: 2px;
    overflow: hidden;
}
.tab {
    display: flex;
    align-items: center;
    flex: none;
    height: 15px;
    padding: 0 3px;
    gap: 2px;
    border: 1px solid #c0c3c5;
    border-bottom: 0;
    background-color: #eaecee;
}
.tab-active {
    font-weight: bold;
    border-color: #fff;
    background-color: #fff;
}
.tab-x {
    margin-left: auto;
    color: #a4a7a9;
}
.tab-home {
    width: 50px;
}
.tab-computer {
    width: 71px;
}
.tab-debian {
    width: 109px;
}
.tab-long {
    width: 114px;
}
.tab-win {
    width: 93px;
}
.tab-x64 {
    width: 80px;
}
.tab-srv {
    width: 46px;
}
.tab-nas {
    width: 69px;
}

/* server manager */
.guest {
    position: relative;
    display: flex;
    flex-direction: column;
    flex: 1;
    min-height: 0;
    background-color: #f7f7f7;
}
.manager-title {
    display: flex;
    align-items: center;
    height: 14px;
    padding: 0 2px;
    gap: 3px;
    color: #77797c;
    background-color: #fff;
}
.manager-buttons button {
    width: 26px;
}
.manager-bar {
    display: flex;
    align-items: center;
    height: 35px;
    padding: 0 16px 0 6px;
    gap: 1px;
    color: #e8e8e8;
    background-color: #404040;
}
.bar-history {
    padding: 0 19px 0 2px;
    color: #7e7e7e;
}
.bar-path {
    display: flex;
    align-items: center;
    gap: 6px;
    font-family: "Open Sans", "Noto Sans", sans-serif;
    font-size: 12px;
    line-height: 18px;
}
.path-arrow {
    width: 4px;
    height: 6px;
}
.bar-tools {
    display: flex;
    align-items: center;
    margin-left: auto;
}
.bar-caret {
    width: 4px;
    height: 3px;
    margin-right: 5px;
}
.bar-rule {
    width: 1px;
    height: 10px;
    margin: 0 11px 0 6px;
    background-color: #d0d0d0;
}
.flag {
    position: relative;
    width: 16px;
    height: 19px;
}
.flag svg {
    width: 10px;
    height: 16px;
}
.flag-count {
    position: absolute;
    right: 0;
    bottom: 0;
    width: 10px;
    background-color: #9b9b9b;
}
.bar-menu {
    margin-left: 12px;
}
.manager-body {
    display: flex;
    flex: 1;
    min-height: 0;
    overflow: hidden;
}
.roles {
    width: 123px;
    padding-top: 10px;
    border-right: 1px solid #c9c9c9;
    border-left: 1px solid #d9d9d9;
    flex: none;
}
.role {
    display: flex;
    align-items: center;
    height: 15px;
    padding-left: 8px;
    gap: 4px;
    overflow: hidden;
    font-family: Lato, "Open Sans", sans-serif;
    font-size: 8px;
    white-space: nowrap;
    color: #484848;
}
.role-active {
    color: #fff;
    background-color: #0072c6;
}
.role-local {
    color: #1c87d6;
}
.dashboard {
    flex: 1;
    min-width: 0;
    padding: 31px 13px 0 15px;
}
.welcome {
    display: flex;
    align-items: flex-end;
    justify-content: flex-end;
    height: 158px;
    padding: 10px 11px;
    margin-bottom: 45px;
    border: 1px solid #c6c6c6;
    background-color: #fff;
}
.tiles {
    display: grid;
    grid-template-columns: repeat(auto-fill, 132px);
    gap: 9px 10px;
    font-family: Lato, "Open Sans", sans-serif;
}
.tile {
    display: flex;
    flex-direction: column;
    height: 141px;
    border: 1px solid #c6c6c6;
    background-color: #fcfcfc;
    color: #444;
}
.tile-head {
    display: flex;
    align-items: center;
    height: 28px;
    margin: 0 5px;
    padding: 0 2px 0 1px;
    gap: 6px;
    border-bottom: 2px solid #41c541;
    font-size: 9px;
    line-height: 12px;
}
.tile-head h3 {
    flex: 1;
    color: #2c2c2c;
}
.tile-head .icon-12 {
    color: #6a6a6a;
}
.tile-rows {
    font-size: 8px;
}
.tile-rows li {
    display: flex;
    align-items: center;
    height: 16px;
    padding-left: 24px;
}
.tile-rows .icon-12 {
    margin-left: -18px;
    margin-right: 6px;
}
.alert-count {
    width: 15px;
    height: 14px;
    margin: 0 5px 0 -20px;
    font-size: 7px;
    line-height: 14px;
    text-align: center;
    color: #fff;
    background-color: #c00000;
}
.tile-alert .tile-head {
    margin: 0;
    padding: 0 7px 0 6px;
    border-bottom: 0;
    background-color: #c00000;
}
.tile-alert .tile-head,
.tile-alert .tile-head h3,
.tile-alert .tile-head .icon-12 {
    color: #fff;
}
.tile-date {
    margin-top: auto;
    padding: 0 4px 6px;
    font-family: Roboto, "Noto Sans", sans-serif;
    text-align: right;
    color: #777;
}
.scroll-v {
    display: flex;
    flex-direction: column;
    align-items: center;
    width: 9px;
    padding: 3px 0 2px;
    gap: 2px;
    background-color: #f0f0f0;
    color: #777;
}
.scroll-v-thumb {
    width: 100%;
    height: 468px;
    margin-bottom: auto;
    background-color: #cdcdcd;
}

/* active directory window */
.ad-window {
    position: absolute;
    top: 50px;
    left: 54px;
    display: flex;
    flex-direction: column;
    width: 424px;
    height: 299px;
    border: 1px solid #8a8a8a;
    background-color: #fff;
    box-shadow: 0 1px 4px rgba(0, 0, 0, 0.3);
}
.ad-title {
    display: flex;
    align-items: center;
    height: 17px;
    padding-left: 5px;
    gap: 4px;
}
.ad-buttons {
    color: #444;
}
.ad-buttons button {
    width: 25px;
}
.ad-menu {
    display: flex;
    align-items: center;
    height: 12px;
    padding-left: 5px;
    gap: 8px;
}
.ad-toolbar {
    display: flex;
    align-items: center;
    height: 16px;
    padding-left: 2px;
    gap: 3px;
    border-top: 1px solid #dcdcdc;
}
.ad-tool-on {
    padding: 2px;
    margin: 0 -2px;
    background-color: #cce4f7;
}
.ad-panes {
    display: flex;
    flex: 1;
    min-height: 0;
    border-top: 2px solid #ececec;
    border-bottom: 1px solid #9a9a9a;
    background-color: #ececec;
}
.ad-left {
    display: flex;
    flex-direction: column;
    width: 110px;
    overflow: hidden;
    border-top: 1px solid #9a9a9a;
    border-right: 1px solid #9a9a9a;
    background-color: #fff;
}
.ad-tree {
    flex: 1;
    padding-top: 1px;
}
.ad-tree li {
    display: flex;
    align-items: center;
    padding-left: 1px;
    gap: 2px;
}
.ad-tree .depth-1 {
    padding-left: 4px;
}
.ad-tree .depth-2 {
    padding-left: 15px;
}
.ad-tree .depth-3 {
    padding-left: 33px;
}
.ad-tree button {
    display: flex;
    align-items: center;
}
.ad-tree span {
    padding: 0 2px;
}
.ad-tree .selected span {
    background-color: #d9d9d9;
}
.twisty {
    color: #999;
}
.twisty-open {
    color: #333;
}
.scroll-h {
    display: flex;
    align-items: center;
    height: 10px;
    padding: 0 3px 0 2px;
    gap: 2px;
    background-color: #f0f0f0;
}
.scroll-h-thumb {
    width: 49px;
    height: 8px;
    margin-right: auto;
    background-color: #cdcdcd;
}
.ad-list {
    flex: 1;
    margin-left: 1px;
    border-top: 1px solid #9a9a9a;
    border-left: 1px solid #9a9a9a;
    background-color: #fff;
}
.ad-list table {
    width: 100%;
    table-layout: fixed;
    border-collapse: collapse;
}
.ad-list th {
    height: 13px;
    padding-left: 4px;
    font-weight: normal;
    text-align: left;
    border-right: 1px solid #e2e2e2;
}
.ad-list th:last-child {
    border-right: 0;
}
.ad-list td {
    height: 11px;
    padding-left: 4px;
    white-space: nowrap;
}
.col-name {
    width: 56px;
}
.col-type {
    width: 56px;
}
.col-desc {
    width: 86px;
}
.icon-user {
    display: inline-block;
    width: 8px;
    height: 10px;
    margin-right: 1px;
    vertical-align: top;
}
.ad-status {
    display: grid;
    grid-template-columns: 1fr 75px 48px;
    height: 12px;
    background-color: #f0f0f0;
}
.ad-status span {
    border-right: 1px solid #dcdcdc;
}

/* guest taskbar */
.guest-taskbar {
    display: flex;
    align-items: stretch;
    height: 24px;
    color: #fff;
    background-color: #00121e;
}
.guest-start {
    display: flex;
    align-items: center;
    justify-content: center;
    width: 27px;
}
.guest-search {
    display: flex;
    align-items: center;
    width: 194px;
    padding-left: 7px;
    gap: 6px;
    color: #444;
    background-color: #f1f1f1;
}
.guest-search input {
    flex: 1;
    min-width: 0;
    font-family: "Open Sans", "Noto Sans", sans-serif;
    font-size: 8px;
}
.guest-search input::placeholder {
    color: #505050;
}
.guest-app {
    display: flex;
    align-items: center;
    justify-content: center;
    width: 28px;
}
.guest-app-open {
    border-top: 2px solid transparent;
    border-bottom: 2px solid #7cb8e4;
}
.guest-app-active {
    border-top-color: #37454e;
    background-color: #37454e;
}
.guest-tray {
    display: flex;
    align-items: center;
    margin-left: auto;
    padding-right: 10px;
    gap: 4px;
}
.guest-clock {
    padding: 0 5px 0 1px;
    text-align: center;
}

/* status bar and host taskbar */
.host-status {
    display: flex;
    align-items: center;
    justify-content: space-between;
    height: 11px;
    padding: 0 15px 0 2px;
    background-color: #e3e5e7;
}
.device-icons {
    display: flex;
    align-items: center;
    gap: 4px;
}
.host-taskbar {
    display: grid;
    grid-template-columns: 1fr auto 1fr;
    align-items: center;
    height: 27px;
    padding: 0 5px 0 11px;
    border-top: 1px solid #cfc5c6;
    background-color: #ecd6d7;
}
.weather {
    display: flex;
    align-items: center;
    gap: 4px;
    text-align: left;
    line-height: 9px;
}
.weather small {
    display: block;
    font-size: 7px;
    color: #6f6465;
}
.host-apps {
    display: flex;
    align-items: center;
}
.host-start {
    margin-right: 8px;
}
.host-search {
    display: flex;
    align-items: center;
    width: 122px;
    height: 18px;
    padding-left: 6px;
    gap: 4px;
    border-radius: 9px;
    background-color: #f9f0f1;
}
.host-search input {
    width: 90px;
    font-size: 8px;
}
.host-search input::placeholder {
    color: #6b6163;
}
.host-app {
    position: relative;
    display: flex;
    align-items: center;
    justify-content: center;
    width: 25px;
    height: 24px;
}
.app-open::after {
    content: "";
    position: absolute;
    bottom: 1px;
    width: 3px;
    height: 2px;
    border-radius: 1px;
    background-color: #8a7f80;
}
.app-active {
    width: 21px;
    height: 22px;
    margin: 0 2px;
    border-radius: 2px;
    background-color: #faf0f1;
}
.app-active::after {
    bottom: 0;
    width: 9px;
    background-color: #d6309a;
}
.badge {
    position: absolute;
    top: 1px;
    right: 1px;
    display: flex;
    align-items: center;
    justify-content: center;
    width: 9px;
    height: 9px;
    border-radius: 50%;
    line-height: 9px;
    color: #fff;
}
.badge-profile {
    background-color: #3c6a2c;
}
.badge-ok {
    background-color: #21a52b;
}
.badge-count {
    background-color: #e3109b;
}
.host-tray {
    display: flex;
    align-items: center;
    justify-content: flex-end;
    padding-right: 8px;
    gap: 5px;
    color: #333;
}
.tray-status {
    display: flex;
    gap: 3px;
    padding: 0 3px;
}
.host-clock {
    text-align: right;
    line-height: 9px;
}
```
